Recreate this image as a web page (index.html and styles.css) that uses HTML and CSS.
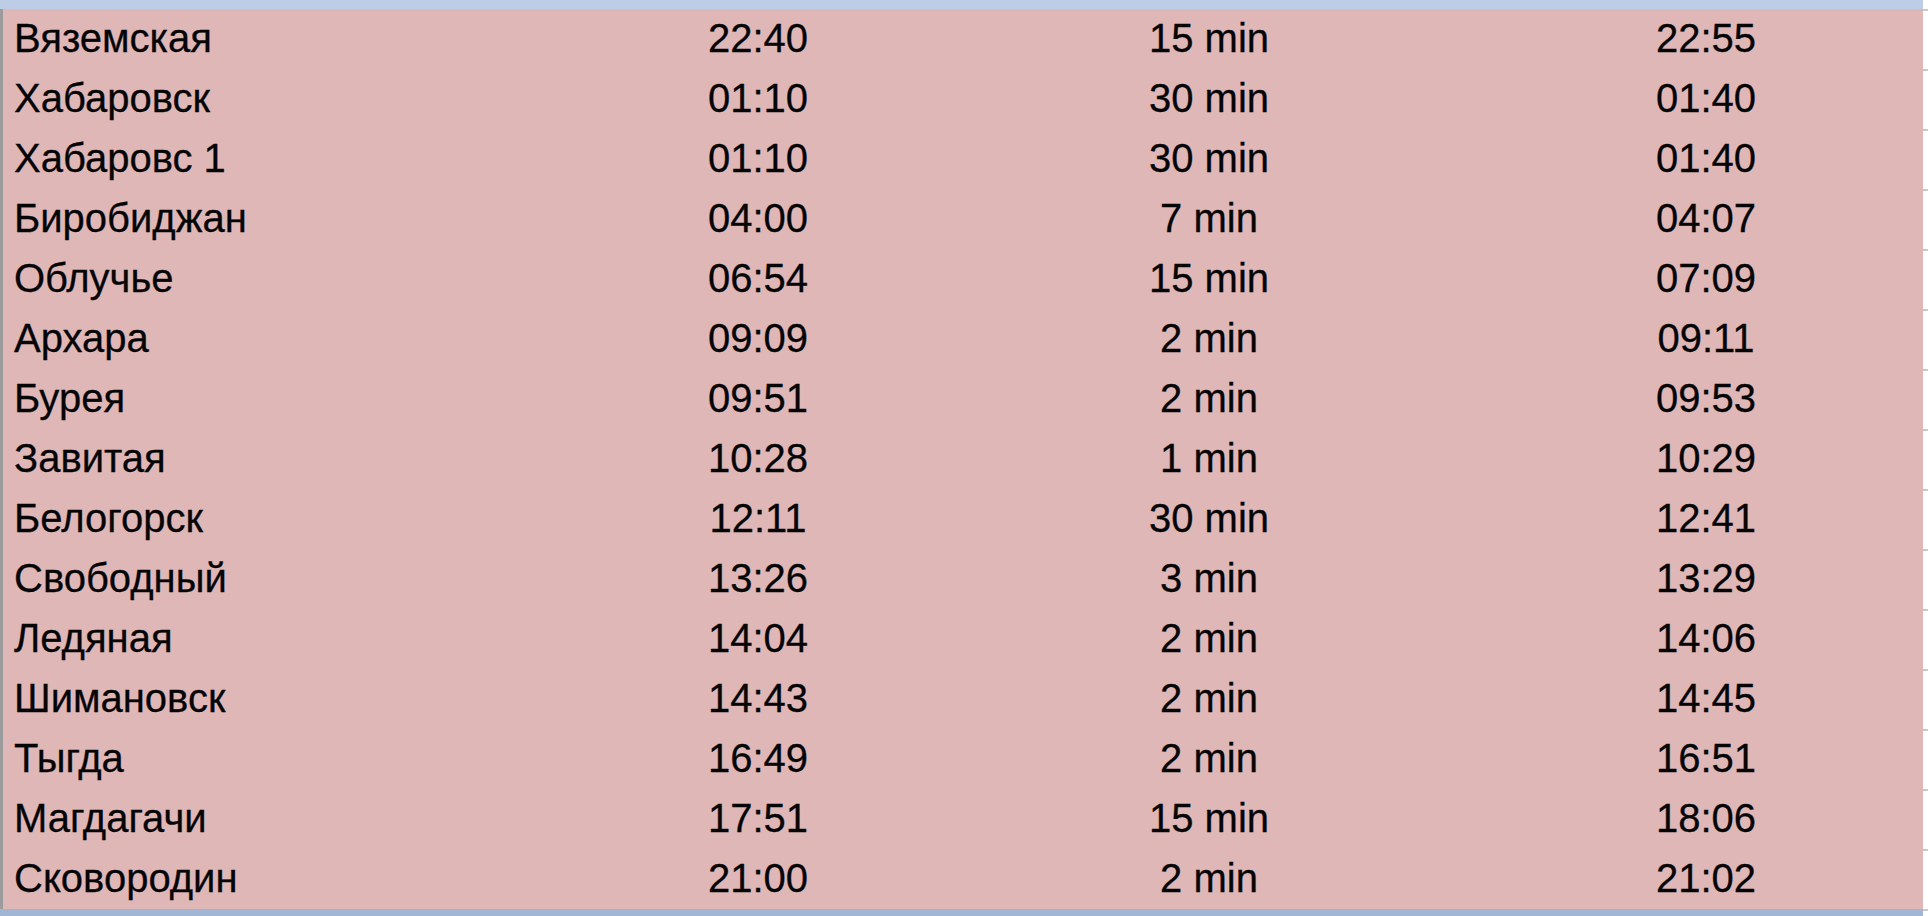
FILE: index.html
```html
<!DOCTYPE html>
<html lang="ru">
<head>
<meta charset="utf-8">
<title>Расписание</title>
<link rel="stylesheet" href="styles.css">
</head>
<body>
<div class="page">
  <div class="sheet">
    <div class="bar bar-top"></div>
    <div class="rows">
      <div class="row"><span class="c name">Вяземская</span><span class="c">22:40</span><span class="c">15 min</span><span class="c">22:55</span></div>
      <div class="row"><span class="c name">Хабаровск</span><span class="c">01:10</span><span class="c">30 min</span><span class="c">01:40</span></div>
      <div class="row"><span class="c name">Хабаровс 1</span><span class="c">01:10</span><span class="c">30 min</span><span class="c">01:40</span></div>
      <div class="row"><span class="c name">Биробиджан</span><span class="c">04:00</span><span class="c">7 min</span><span class="c">04:07</span></div>
      <div class="row"><span class="c name">Облучье</span><span class="c">06:54</span><span class="c">15 min</span><span class="c">07:09</span></div>
      <div class="row"><span class="c name">Архара</span><span class="c">09:09</span><span class="c">2 min</span><span class="c">09:11</span></div>
      <div class="row"><span class="c name">Бурея</span><span class="c">09:51</span><span class="c">2 min</span><span class="c">09:53</span></div>
      <div class="row"><span class="c name">Завитая</span><span class="c">10:28</span><span class="c">1 min</span><span class="c">10:29</span></div>
      <div class="row"><span class="c name">Белогорск</span><span class="c">12:11</span><span class="c">30 min</span><span class="c">12:41</span></div>
      <div class="row"><span class="c name">Свободный</span><span class="c">13:26</span><span class="c">3 min</span><span class="c">13:29</span></div>
      <div class="row"><span class="c name">Ледяная</span><span class="c">14:04</span><span class="c">2 min</span><span class="c">14:06</span></div>
      <div class="row"><span class="c name">Шимановск</span><span class="c">14:43</span><span class="c">2 min</span><span class="c">14:45</span></div>
      <div class="row"><span class="c name">Тыгда</span><span class="c">16:49</span><span class="c">2 min</span><span class="c">16:51</span></div>
      <div class="row"><span class="c name">Магдагачи</span><span class="c">17:51</span><span class="c">15 min</span><span class="c">18:06</span></div>
      <div class="row"><span class="c name">Сковородин</span><span class="c">21:00</span><span class="c">2 min</span><span class="c">21:02</span></div>
    </div>
    <div class="bar bar-bottom"></div>
  </div>
  <div class="gutter">
    <span class="tick"></span><span class="tick"></span><span class="tick"></span><span class="tick"></span><span class="tick"></span>
    <span class="tick"></span><span class="tick"></span><span class="tick"></span><span class="tick"></span><span class="tick"></span>
    <span class="tick"></span><span class="tick"></span><span class="tick"></span><span class="tick"></span><span class="tick"></span>
    <span class="tick"></span>
  </div>
</div>
</body>
</html>
```
FILE: styles.css
```css
html, body {
  margin: 0;
  padding: 0;
  background: #ffffff;
  overflow: hidden;
}

.page {
  display: flex;
  width: 1928px;
  height: 916px;
  font-family: "Liberation Sans", Arial, sans-serif;
  color: #050505;
}

.sheet {
  width: 1923px;
  display: flex;
  flex-direction: column;
}

.bar-top {
  height: 9px;
  background: #bccde5;
}

.bar-bottom {
  flex: 1;
  background: #a1b6d5;
}

.rows {
  background: #dfb7b7;
  border-left: 3px solid #9c9c9c;
}

.row {
  display: grid;
  grid-template-columns: 584px 342px 560px 434px;
  height: 60px;
  align-items: center;
}

.c {
  font-size: 40px;
  line-height: 1;
  text-align: center;
  padding-bottom: 2px;
  -webkit-text-stroke: 0.3px #050505;
}

.c.name {
  text-align: left;
  padding-left: 11px;
}

.gutter {
  width: 5px;
  display: flex;
  flex-direction: column;
  padding-top: 9px;
  gap: 58px;
}

.tick {
  display: block;
  height: 2px;
  background: #c9c9c9;
}
```
